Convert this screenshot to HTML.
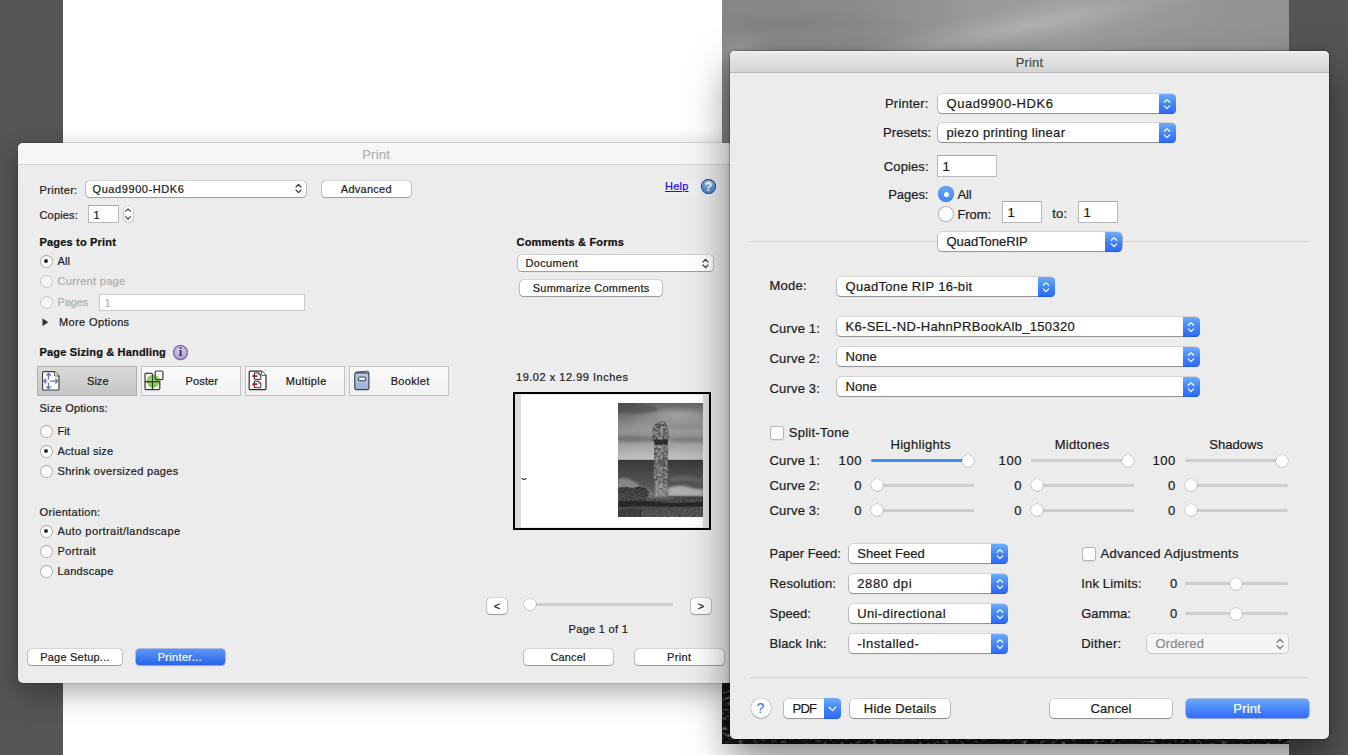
<!DOCTYPE html>
<html lang="en"><head><meta charset="utf-8"><title>Print</title>
<style>
html,body{margin:0;padding:0}
body{width:1348px;height:755px;overflow:hidden;position:relative;background:#555;font-family:"Liberation Sans",sans-serif;}
body>div,body>svg{position:absolute;box-sizing:border-box}
.t{position:absolute;white-space:pre;-webkit-text-stroke:.22px currentColor;}
#page{left:63px;top:0;width:1226px;height:755px;background:#fff}
#photo{left:722px;top:0;width:567px;height:744px;background:#1c1c1c;overflow:hidden}
#ph-top{position:absolute;left:0;top:0;width:567px;height:160px;
 background:
  radial-gradient(ellipse 120px 13px at 80px 22px, rgba(116,116,116,.3), rgba(116,116,116,0) 100%),
  radial-gradient(ellipse 36px 20px at 18px 50px, rgba(165,165,165,.55), rgba(165,165,165,0) 100%),
  linear-gradient(90deg,#868686 0%,#8a8a8a 22%,#919191 34%,#9a9a9a 46%,#9f9f9f 60%,#999999 74%,#959595 87%,#929292 100%);}
#ph-band{position:absolute;left:85px;top:-4px;width:440px;height:60px;transform:rotate(-11.5deg);
 background:radial-gradient(ellipse 190px 22px at 50% 50%, rgba(186,186,186,.7), rgba(178,178,178,.32) 55%, rgba(170,170,170,0) 100%);}
#ph-bot{position:absolute;left:0;top:600px;width:567px;height:144px;background:#161616}
/* dialogs */
#ld{left:18px;top:143px;width:716px;height:540px;background:#ececec;border-radius:5px;
 box-shadow:0 0 0 .5px rgba(0,0,0,.22),0 12px 28px rgba(0,0,0,.28),0 0 18px rgba(0,0,0,.07);}
#ld .tb{position:absolute;left:0;top:0;right:0;height:21px;background:#f6f6f6;border-bottom:1px solid #d2d2d2;border-radius:5px 5px 0 0}
#rd{left:730px;top:51px;width:599px;height:688px;background:#ececec;border-radius:5px;
 box-shadow:0 0 0 .5px rgba(0,0,0,.38),0 20px 40px rgba(0,0,0,.5),0 0 4px rgba(0,0,0,.15);}
#rd .tb{position:absolute;left:0;top:0;right:0;height:21px;background:linear-gradient(#ebebeb,#d4d4d4);border-bottom:1px solid #b4b4b4;border-radius:5px 5px 0 0;box-shadow:inset 0 1px 0 #f6f6f6}
/* small controls (left dialog) */
.sel-s{background:#fff;border-radius:3.5px;box-shadow:0 0 0 .5px rgba(0,0,0,.22),0 .5px 0 .5px rgba(0,0,0,.18),0 1px 1px rgba(0,0,0,.08)}
.sel-s .chs{position:absolute;right:4px;top:2.4px}
.btn-s{background:#fff;border-radius:3.5px;box-shadow:0 0 0 .5px rgba(0,0,0,.2),0 .5px 0 .5px rgba(0,0,0,.2),0 1px 1px rgba(0,0,0,.08)}
.btn-s.blue{background:linear-gradient(#5b97f7,#2a63ea);box-shadow:0 0 0 .5px rgba(30,70,200,.6),0 1px 1px rgba(0,0,0,.15)}
.inp{background:#fff;border:1px solid #b9b9b9;border-top-color:#a7a7a7}
.step{position:absolute;background:#fff;border-radius:5px;box-shadow:0 0 0 .5px rgba(0,0,0,.16),0 .5px 1px .5px rgba(0,0,0,.14)}
.step svg{position:absolute;left:0;top:0}
.rad-s{width:13px;height:13px;border-radius:50%;background:#fff;box-shadow:inset 0 0 0 1px #a9a9a9,inset 0 1px 1px rgba(0,0,0,.08)}
.rad-s.dis{box-shadow:inset 0 0 0 1px #c6c6c6;background:#f4f4f4}
.rad-s.on:after{content:"";position:absolute;left:4.5px;top:4.5px;width:4px;height:4px;border-radius:50%;background:#2a2a2a}
.info{width:15px;height:15px;border-radius:50%;background:radial-gradient(circle at 50% 35%,#dcd3ec,#b3a5d2 60%,#9c8cc2 100%);box-shadow:inset 0 0 0 1px #6f5f96,0 .5px .5px rgba(0,0,0,.2);text-align:center}
.info span{display:block;font:bold 12.5px/15px "Liberation Serif",serif;color:#3a2b63}
.help-s{width:15px;height:15px;border-radius:50%;background:radial-gradient(circle at 50% 22%,#a4c6f0,#5b8dd2 55%,#4a7cc6 100%);box-shadow:inset 0 0 0 .9px #30508f;text-align:center}
.help-s span{display:block;font:bold 13px/15.4px "Liberation Sans",sans-serif;color:#fff}
.seg{background:linear-gradient(#fafafa,#f1f1f1);border:1px solid #c3c3c3}
.seg.on{background:linear-gradient(#d9d9d9,#c6c6c6);border-color:#aeaeae}
#pv{left:513px;top:392px;width:198px;height:138px;border:2px solid #000;background:#dcdcdc;overflow:hidden}
.trk{background:#cdcdcd;border-radius:1.5px}
.trk.bl{background:#3f8cf7}
.knob{border-radius:50%;background:#fff;box-shadow:0 0 0 .5px rgba(0,0,0,.2),0 .5px 1px rgba(0,0,0,.16)}
/* regular controls (right dialog) */
.pop{background:#fff;border-radius:4px;box-shadow:0 0 0 .5px rgba(0,0,0,.2),0 .5px 0 .5px rgba(0,0,0,.22),0 1px 1.5px rgba(0,0,0,.12)}
.pop .cap{position:absolute;right:-.5px;top:-.5px;width:17.2px;height:20px;border-radius:0 4.5px 4.5px 0;background:linear-gradient(#6cabfb,#3f82f8 55%,#2c68f5);box-shadow:inset 0 -.5px 0 rgba(20,60,200,.5)}
.pop.dis{background:#f5f5f5;box-shadow:0 0 0 .5px rgba(0,0,0,.14),0 .5px 0 .5px rgba(0,0,0,.1)}
.btn{background:#fff;border-radius:4px;box-shadow:0 0 0 .5px rgba(0,0,0,.2),0 .5px 0 .5px rgba(0,0,0,.22),0 1px 1.5px rgba(0,0,0,.12)}
.btn.blue{background:linear-gradient(#69a8fb,#2d6bf6);box-shadow:0 0 0 .5px rgba(28,80,220,.6),0 1px 1.5px rgba(0,0,0,.15)}
.btn.pdf .cap{position:absolute;right:-.5px;top:-.5px;width:16.8px;height:20.4px;border-radius:0 4.5px 4.5px 0;background:linear-gradient(#6cabfb,#3f82f8 55%,#2c68f5);box-shadow:inset 0 -.5px 0 rgba(20,60,200,.5)}
.rad{width:16px;height:16px;border-radius:50%;background:#fff;box-shadow:inset 0 0 0 1px #b3b3b3,0 .5px 1px rgba(0,0,0,.1)}
.rad.on{background:linear-gradient(#6aa6f9,#4485f5);box-shadow:inset 0 0 0 .5px rgba(40,100,230,.5)}
.rad.on:after{content:"";position:absolute;left:5.5px;top:5.5px;width:5px;height:5px;border-radius:50%;background:#fff}
.chk{background:#fff;border-radius:3px;box-shadow:inset 0 0 0 1px #b5b5b5,0 .5px 1px rgba(0,0,0,.08)}
.sep{background:#d2d2d2}
.help-l{width:20px;height:20px;border-radius:50%;background:#fff;box-shadow:0 0 0 .5px rgba(0,0,0,.22),0 1px 1.5px rgba(0,0,0,.18);text-align:center}
.help-l span{display:block;font:14px/20.5px "Liberation Sans",sans-serif;color:#2b74f2}

</style></head>
<body>
<div id="page"></div>
<div id="photo"><div id="ph-top"></div><div id="ph-band"></div><div id="ph-bot"><svg width="567" height="144" style="position:absolute;left:0;top:0"><filter id="gr" x="0" y="0" width="100%" height="100%"><feTurbulence type="fractalNoise" baseFrequency="0.18 0.32" numOctaves="3" seed="11"/><feColorMatrix type="matrix" values="0 0 0 0 0.85  0 0 0 0 0.85  0 0 0 0 0.85  2.6 2.6 0 0 -2.75"/></filter><rect width="567" height="144" filter="url(#gr)" opacity="0.5"/></svg></div></div>
<div id="ld"><div class="tb"></div></div>
<div class="t" style="left:362.13px;top:146.60px;font-size:13px;line-height:16px;color:#b0b0b0;letter-spacing:0.253px;">Print</div>
<div class="t" style="left:39.50px;top:182.90px;font-size:11px;line-height:14px;color:#1c1c1c;letter-spacing:0.316px;">Printer:</div>
<div class="sel-s" style="left:86.1px;top:181.1px;width:219.8px;height:15.6px;"><svg class="chs" width="7" height="11" viewBox="0 0 7 11"><path d="M1 4 L3.5 1.4 L6 4 M1 7 L3.5 9.6 L6 7" fill="none" stroke="#333" stroke-width="1.15" stroke-linecap="round" stroke-linejoin="round"/></svg></div>
<div class="t" style="left:92.50px;top:181.70px;font-size:11px;line-height:14px;color:#1c1c1c;letter-spacing:0.585px;">Quad9900-HDK6</div>
<div class="btn-s" style="left:321.6px;top:181.1px;width:89.3px;height:15.6px;"></div>
<div class="t" style="left:340.83px;top:182.00px;font-size:11px;line-height:14px;color:#1c1c1c;letter-spacing:0.258px;">Advanced</div>
<div class="" style="left:660.5px;top:178.5px;width:38.2px;height:18.2px;background:#eeeeee;"></div>
<div class="t" style="left:665.00px;top:179.30px;font-size:11px;line-height:14px;color:#1f0cf0;letter-spacing:0.219px;text-decoration:underline;">Help</div>
<div class="help-s" style="left:701px;top:179.2px"><span>?</span></div>
<div class="t" style="left:39.50px;top:207.80px;font-size:11px;line-height:14px;color:#1c1c1c;letter-spacing:0.172px;">Copies:</div>
<div class="inp" style="left:88px;top:205px;width:31px;height:18px;"></div>
<div class="t" style="left:93.50px;top:207.80px;font-size:11px;line-height:14px;color:#1c1c1c;">1</div>
<div class="step" style="left:123.6px;top:205.9px;width:9.6px;height:16.4px"><svg width="10" height="18" viewBox="0 0 10 18" style="position:absolute;left:-0.2px;top:-0.8px"><path d="M2.5 6.4 L5 3.9 L7.5 6.4 M2.5 11.6 L5 14.1 L7.5 11.6" fill="none" stroke="#3a3a3a" stroke-width="1.1" stroke-linecap="round" stroke-linejoin="round"/></svg></div>
<div class="t" style="left:39.50px;top:235.00px;font-size:11px;line-height:14px;color:#111;letter-spacing:0.181px;font-weight:bold;">Pages to Print</div>
<div class="rad-s on" style="left:39.5px;top:254.5px"></div>
<div class="t" style="left:57.50px;top:254.20px;font-size:11px;line-height:14px;color:#1c1c1c;letter-spacing:0.089px;">All</div>
<div class="rad-s dis" style="left:39.5px;top:274.5px"></div>
<div class="t" style="left:57.50px;top:274.20px;font-size:11px;line-height:14px;color:#adadad;letter-spacing:0.315px;">Current page</div>
<div class="rad-s dis" style="left:39.5px;top:295.5px"></div>
<div class="t" style="left:57.50px;top:295.20px;font-size:11px;line-height:14px;color:#adadad;letter-spacing:-0.141px;">Pages</div>
<div class="inp" style="left:99px;top:293.5px;width:206px;height:17px;border-color:#c9c9c9;"></div>
<div class="t" style="left:104.50px;top:295.80px;font-size:11px;line-height:14px;color:#b4b4b4;">1</div>
<svg style="position:absolute;left:41.6px;top:317.8px" width="8" height="9" viewBox="0 0 8 9"><path d="M0.5 0.3 L6.2 4.3 L0.5 8.3 Z" fill="#333"/></svg>
<div class="t" style="left:59.00px;top:315.20px;font-size:11px;line-height:14px;color:#1c1c1c;letter-spacing:0.372px;">More Options</div>
<div class="t" style="left:39.50px;top:345.40px;font-size:11px;line-height:14px;color:#111;letter-spacing:0.166px;font-weight:bold;">Page Sizing &amp; Handling</div>
<div class="info" style="left:173px;top:345px"><span>i</span></div>
<div class="seg on" style="left:37px;top:366px;width:100px;height:30px;"></div>
<div style="position:absolute;left:40.5px;top:370px;line-height:0"><svg width="20" height="21" viewBox="0 0 20 21"><path d="M2.6 1.6 H13.6 L18 6 V19 Q18 20 17 20 H2.6 Q1.6 20 1.6 19 V2.6 Q1.6 1.6 2.6 1.6 Z" fill="#fff" stroke="#3c3c3c" stroke-width="1.15" stroke-linejoin="round"/><path d="M13.6 1.6 V5 Q13.6 6 14.6 6 H18" fill="#f2f2f2" stroke="#3c3c3c" stroke-width="0.9" stroke-linejoin="round"/><g stroke="#6a74b6" stroke-width="1.35" fill="none" stroke-linecap="round" stroke-linejoin="round"><path d="M7.5 3.4 V9 M5.5 5.4 L7.5 3.3 L9.5 5.4"/><path d="M7.5 13.2 V18.6 M5.5 16.6 L7.5 18.7 L9.5 16.6"/><path d="M2.9 11.1 H6 M4.7 9.2 L2.8 11.1 L4.7 13"/><path d="M9.2 11.1 H16.6 M14.7 9.2 L16.7 11.1 L14.7 13"/></g></svg></div>
<div class="t" style="left:87.06px;top:374.30px;font-size:11px;line-height:14px;color:#1c1c1c;letter-spacing:0.023px;">Size</div>
<div class="seg" style="left:141px;top:366px;width:100px;height:30px;"></div>
<div style="position:absolute;left:144px;top:370px;line-height:0"><svg width="21" height="21" viewBox="0 0 21 21"><defs><radialGradient id="gc" cx="0.45" cy="0.4" r="0.6"><stop offset="0" stop-color="#9be06a"/><stop offset="1" stop-color="#7cc84a"/></radialGradient></defs><circle cx="9.1" cy="11.1" r="6.4" fill="url(#gc)"/><g fill="none" stroke="#3a3a3a" stroke-width="1.2" stroke-linejoin="round"><path d="M2 3.3 H7.5 Q8.5 3.3 8.5 4.3 V11.6 H1 V4.3 Q1 3.3 2 3.3 Z"/><path d="M1 11.6 H8.5 V19.6 H2 Q1 19.6 1 18.6 Z"/><path d="M8.5 11.6 H15.8 V18.6 Q15.8 19.6 14.8 19.6 H8.5 Z"/><rect x="11.2" y="1" width="7.7" height="8.6" rx="1.1"/></g></svg></div>
<div class="t" style="left:185.61px;top:374.30px;font-size:11px;line-height:14px;color:#1c1c1c;letter-spacing:0.117px;">Poster</div>
<div class="seg" style="left:245px;top:366px;width:100px;height:30px;"></div>
<div style="position:absolute;left:248px;top:370px;line-height:0"><svg width="20" height="21" viewBox="0 0 20 21"><path d="M2.2 1.1 H13.6 L18 5.4 V18.7 Q18 19.7 17 19.7 H2.2 Q1.2 19.7 1.2 18.7 V2.1 Q1.2 1.1 2.2 1.1 Z" fill="#fbfbfb" stroke="#2e2e2e" stroke-width="1.2" stroke-linejoin="round"/><path d="M13.6 1.1 V4.6 Q13.6 5.4 14.4 5.4 H18" fill="#fff" stroke="#2e2e2e" stroke-width="0.8" stroke-linejoin="round"/><g fill="#fff" stroke="#2e2e2e" stroke-width="1" stroke-linejoin="round"><path d="M6.4 2.9 H10.8 L12.8 4.9 V9.4 H6.4 Z"/><path d="M6.4 11.2 H10.8 L12.8 13.2 V17.7 H6.4 Z"/></g><g fill="none" stroke="#2e2e2e" stroke-width="0.7"><path d="M10.8 2.9 V4.9 H12.8"/><path d="M10.8 11.2 V13.2 H12.8"/></g><g fill="#c40f23"><path d="M3.9 6.1 L6 4.4 V5.2 H9.4 V7 H6 V7.8 Z"/><path d="M3.9 14.2 L6 12.5 V13.3 H9.4 V15.1 H6 V15.9 Z"/></g></svg></div>
<div class="t" style="left:285.69px;top:374.30px;font-size:11px;line-height:14px;color:#1c1c1c;letter-spacing:0.387px;">Multiple</div>
<div class="seg" style="left:349px;top:366px;width:100px;height:30px;"></div>
<div style="position:absolute;left:353.8px;top:370px;line-height:0"><svg width="17" height="21" viewBox="0 0 17 21"><defs><linearGradient id="bk" x1="0" y1="0" x2="0" y2="1"><stop offset="0" stop-color="#b7cdea"/><stop offset="1" stop-color="#98b4d9"/></linearGradient></defs><path d="M1.4 3.2 Q1.6 2 3 1.9 L13.4 1.1 Q14.6 1.1 14.8 2.2 V3.4 Z" fill="#e6ebf2" stroke="#3d4656" stroke-width="0.9" stroke-linejoin="round"/><rect x="0.8" y="2.9" width="14.1" height="16.7" rx="1.6" fill="url(#bk)" stroke="#3d4656" stroke-width="1.2"/><rect x="4.6" y="7.1" width="7" height="3.6" rx="0.5" fill="#fff" stroke="#333a48" stroke-width="1"/></svg></div>
<div class="t" style="left:390.66px;top:374.30px;font-size:11px;line-height:14px;color:#1c1c1c;letter-spacing:0.328px;">Booklet</div>
<div class="t" style="left:39.50px;top:401.20px;font-size:11px;line-height:14px;color:#1c1c1c;letter-spacing:0.237px;">Size Options:</div>
<div class="rad-s" style="left:39.5px;top:424.5px"></div>
<div class="t" style="left:57.50px;top:424.20px;font-size:11px;line-height:14px;color:#1c1c1c;letter-spacing:0.089px;">Fit</div>
<div class="rad-s on" style="left:39.5px;top:444.5px"></div>
<div class="t" style="left:57.50px;top:444.20px;font-size:11px;line-height:14px;color:#1c1c1c;letter-spacing:0.254px;">Actual size</div>
<div class="rad-s" style="left:39.5px;top:464.5px"></div>
<div class="t" style="left:57.50px;top:464.20px;font-size:11px;line-height:14px;color:#1c1c1c;letter-spacing:0.303px;">Shrink oversized pages</div>
<div class="t" style="left:39.50px;top:505.00px;font-size:11px;line-height:14px;color:#1c1c1c;letter-spacing:0.344px;">Orientation:</div>
<div class="rad-s on" style="left:39.5px;top:524.5px"></div>
<div class="t" style="left:57.50px;top:524.20px;font-size:11px;line-height:14px;color:#1c1c1c;letter-spacing:0.429px;">Auto portrait/landscape</div>
<div class="rad-s" style="left:39.5px;top:544.5px"></div>
<div class="t" style="left:57.50px;top:544.20px;font-size:11px;line-height:14px;color:#1c1c1c;letter-spacing:0.379px;">Portrait</div>
<div class="rad-s" style="left:39.5px;top:564.5px"></div>
<div class="t" style="left:57.50px;top:564.20px;font-size:11px;line-height:14px;color:#1c1c1c;letter-spacing:0.241px;">Landscape</div>
<div class="btn-s" style="left:27.6px;top:648.6px;width:94.3px;height:16.1px;"></div>
<div class="t" style="left:40.16px;top:650.20px;font-size:11px;line-height:14px;color:#1c1c1c;letter-spacing:0.218px;">Page Setup...</div>
<div class="btn-s blue" style="left:135.6px;top:648.6px;width:89.3px;height:16.1px;"></div>
<div class="t" style="left:157.64px;top:650.20px;font-size:11px;line-height:14px;color:#fff;letter-spacing:0.328px;">Printer...</div>
<div class="t" style="left:516.50px;top:235.00px;font-size:11px;line-height:14px;color:#111;letter-spacing:0.186px;font-weight:bold;">Comments &amp; Forms</div>
<div class="sel-s" style="left:518.1px;top:255.4px;width:195.0px;height:15.6px;"><svg class="chs" width="7" height="11" viewBox="0 0 7 11"><path d="M1 4 L3.5 1.4 L6 4 M1 7 L3.5 9.6 L6 7" fill="none" stroke="#333" stroke-width="1.15" stroke-linecap="round" stroke-linejoin="round"/></svg></div>
<div class="t" style="left:525.50px;top:255.90px;font-size:11px;line-height:14px;color:#1c1c1c;letter-spacing:0.326px;">Document</div>
<div class="btn-s" style="left:519.8000000000001px;top:279.8px;width:142.3px;height:16.1px;"></div>
<div class="t" style="left:532.64px;top:281.30px;font-size:11px;line-height:14px;color:#1c1c1c;letter-spacing:0.286px;">Summarize Comments</div>
<div class="t" style="left:516.00px;top:370.20px;font-size:11px;line-height:14px;color:#1c1c1c;letter-spacing:0.518px;">19.02 x 12.99 Inches</div>
<div id="pv"><svg width="194" height="134" viewBox="0 0 194 134" style="position:absolute;left:0;top:0">
<defs>
<linearGradient id="sky" x1="0" y1="0" x2="0" y2="1"><stop offset="0" stop-color="#646464"/><stop offset="0.22" stop-color="#8c8c8c"/><stop offset="0.45" stop-color="#9d9d9d"/><stop offset="0.6" stop-color="#909090"/><stop offset="0.75" stop-color="#a6a6a6"/><stop offset="0.9" stop-color="#b8b8b8"/><stop offset="1" stop-color="#c0c0c0"/></linearGradient>
<radialGradient id="skyl" cx="0" cy="0" r="1"><stop offset="0" stop-color="#000" stop-opacity="0.3"/><stop offset="0.6" stop-color="#000" stop-opacity="0.05"/><stop offset="1" stop-color="#000" stop-opacity="0"/></radialGradient>
<linearGradient id="sea" x1="0" y1="0" x2="0" y2="1"><stop offset="0" stop-color="#393939"/><stop offset="0.35" stop-color="#4a4a4a"/><stop offset="0.7" stop-color="#585858"/><stop offset="1" stop-color="#6e6e6e"/></linearGradient>
<linearGradient id="land" x1="0" y1="0" x2="0" y2="1"><stop offset="0" stop-color="#2b2b2b"/><stop offset="0.4" stop-color="#3a3a3a"/><stop offset="1" stop-color="#474747"/></linearGradient>
<linearGradient id="col" x1="0" y1="0" x2="1" y2="0"><stop offset="0" stop-color="#787878"/><stop offset="0.45" stop-color="#a2a2a2"/><stop offset="1" stop-color="#828282"/></linearGradient>
<radialGradient id="cl1" cx="0.5" cy="0.5" r="0.5"><stop offset="0" stop-color="#ababab" stop-opacity="0.7"/><stop offset="1" stop-color="#ababab" stop-opacity="0"/></radialGradient>
<filter id="bl" x="-30%" y="-200%" width="160%" height="500%"><feGaussianBlur stdDeviation="1.3"/></filter>
<filter id="bl2" x="-20%" y="-100%" width="140%" height="300%"><feGaussianBlur stdDeviation="0.5"/></filter>
<filter id="rock" x="0" y="0" width="100%" height="100%"><feTurbulence type="fractalNoise" baseFrequency="0.42" numOctaves="2" seed="7" result="n"/><feColorMatrix in="n" type="matrix" values="0 0 0 0 0  0 0 0 0 0  0 0 0 0 0  1.9 1.9 0 0 -1.45" result="a"/><feComposite in="a" in2="SourceGraphic" operator="in"/></filter>
<filter id="grass" x="0" y="0" width="100%" height="100%"><feTurbulence type="fractalNoise" baseFrequency="0.5 0.9" numOctaves="3" seed="3" result="n"/><feColorMatrix in="n" type="matrix" values="0 0 0 0 0.55  0 0 0 0 0.55  0 0 0 0 0.55  1.6 1.6 0 0 -1.3" result="a"/><feComposite in="a" in2="SourceGraphic" operator="in"/></filter>
<clipPath id="pc"><rect x="0" y="0" width="85" height="114"/></clipPath>
</defs>
<rect x="0" y="0" width="194" height="134" fill="#dcdcdc"/>
<rect x="6" y="0.5" width="182" height="133" fill="#fff"/>
<g transform="translate(103,9)" clip-path="url(#pc)">
<rect x="0" y="0" width="85" height="57.5" fill="url(#sky)"/>
<rect x="0" y="0" width="50" height="50" fill="url(#skyl)"/>
<ellipse cx="60" cy="12" rx="32" ry="8" fill="url(#cl1)"/>
<ellipse cx="14" cy="36" rx="24" ry="3" fill="#636363" opacity="0.55" filter="url(#bl)"/>
<ellipse cx="70" cy="37" rx="20" ry="2.6" fill="#666" opacity="0.5" filter="url(#bl)"/>
<ellipse cx="16" cy="6" rx="24" ry="5" fill="#4a4a4a" opacity="0.5" filter="url(#bl)"/>
<ellipse cx="68" cy="24" rx="20" ry="3" fill="#777" opacity="0.35" filter="url(#bl)"/>
<rect x="0" y="57" width="85" height="40" fill="url(#sea)"/>
<rect x="0" y="56.8" width="85" height="0.9" fill="#303030" opacity="0.7"/>
<path d="M0 76 Q7 73 15 78 Q22 83 30 86 L34 92 H0 Z" fill="#a8a8a8" opacity="0.6" filter="url(#bl)"/>
<path d="M50 85 Q60 81 70 84 T85 86 V93 H50 Z" fill="#c8c8c8" opacity="0.75" filter="url(#bl)"/>
<path d="M52 74 Q66 70 85 76 V80 Q66 76 52 79 Z" fill="#808080" opacity="0.4" filter="url(#bl)"/>
<path d="M0 85 Q6 82.4 14 85 L19 84 Q24 82 27.6 85 L32 90 L36 92.6 L50 93.4 H85 V114 H0 Z" fill="url(#land)"/>
<path d="M0 85 Q6 82.4 14 85 L19 84 Q24 82 27.6 85 L32 90 L36 92.6 L50 93.4 H85 V114 H0 Z" fill="#9a9a9a" filter="url(#grass)" opacity="0.3"/>
<path d="M0 98.5 Q20 97 40 99 T85 98.5 V103.5 Q60 104.4 40 103.5 T0 104 Z" fill="#1c1c1c" opacity="0.75" filter="url(#bl2)"/>
<path d="M0 106 H24 V114 H0 Z" fill="#2a2a2a" opacity="0.45" filter="url(#bl2)"/>
<path d="M36.4 21.6 Q36 18.8 38.4 18.8 L40.8 19.2 L43.4 18.6 Q47.8 18.4 48.8 21 L50 26.4 L51 35.6 L49.6 37.4 L50.2 48 L49.6 60 L50.4 72 L49.4 82 L50.4 95.2 H35.6 L36.6 84 L35.6 74 L36.4 60 L36 48 L36.6 38.6 L33.4 37.6 L34.8 31 L34.4 26 Z" fill="url(#col)"/>
<path d="M36.4 21.6 Q36 18.8 38.4 18.8 L40.8 19.2 L43.4 18.6 Q47.8 18.4 48.8 21 L50 26.4 L51 35.6 L49.6 37.4 L50.2 48 L49.6 60 L50.4 72 L49.4 82 L50.4 95.2 H35.6 L36.6 84 L35.6 74 L36.4 60 L36 48 L36.6 38.6 L33.4 37.6 L34.8 31 L34.4 26 Z" fill="#303030" filter="url(#rock)" opacity="0.5"/>
<path d="M35.4 36.4 H50 L49.6 41.6 H36.8 Z" fill="#242424" opacity="0.9"/>
<ellipse cx="42.8" cy="59.6" rx="3.6" ry="3.6" fill="#4c4c4c" opacity="0.55"/>
<ellipse cx="41.6" cy="22.2" rx="2" ry="1.6" fill="#333" opacity="0.6"/>
<path d="M36.6 80.4 H49.6 L50.4 95.2 H35.8 Z" fill="#b0b0b0" opacity="0.3"/>
<path d="M28 93.6 H56 V96.6 H28 Z" fill="#5e5e5e" opacity="0.8"/>
<rect x="30.4" y="90" width="4.4" height="4.4" fill="#808080" opacity="0.75"/>
</g>
<path d="M6.5 84.4 h1.2 v1 h2.6 v-0.8 h1.4" stroke="#111" stroke-width="0.9" fill="none"/>
</svg></div>
<div class="btn-s" style="left:486.6px;top:598.1px;width:20.3px;height:15.6px;"></div>
<div class="t" style="left:493.68px;top:598.60px;font-size:11px;line-height:14px;color:#1c1c1c;">&lt;</div>
<div class="btn-s" style="left:690.6px;top:598.1px;width:20.3px;height:15.6px;"></div>
<div class="t" style="left:697.68px;top:598.60px;font-size:11px;line-height:14px;color:#1c1c1c;">&gt;</div>
<div class="trk" style="left:526px;top:603px;width:147px;height:3px;"></div>
<div class="knob" style="left:524.4px;top:598.7px;width:11.6px;height:11.6px;"></div>
<div class="t" style="left:568.60px;top:622.20px;font-size:11px;line-height:14px;color:#1c1c1c;letter-spacing:0.293px;">Page 1 of 1</div>
<div class="btn-s" style="left:523.6px;top:648.6px;width:89.5px;height:16.1px;"></div>
<div class="t" style="left:550.56px;top:650.20px;font-size:11px;line-height:14px;color:#1c1c1c;letter-spacing:0.125px;">Cancel</div>
<div class="btn-s" style="left:634.6px;top:648.6px;width:89.3px;height:16.1px;"></div>
<div class="t" style="left:666.94px;top:650.20px;font-size:11px;line-height:14px;color:#1c1c1c;letter-spacing:0.375px;">Print</div>
<div id="rd"><div class="tb"></div></div>
<div class="t" style="left:1015.63px;top:55.00px;font-size:13px;line-height:16px;color:#4b4b4b;letter-spacing:0.203px;">Print</div>
<div class="t" style="left:884.98px;top:96.10px;font-size:13px;line-height:16px;color:#1c1c1c;letter-spacing:0.230px;">Printer:</div>
<div class="pop" style="left:938.0px;top:94.0px;width:237.2px;height:19px;"><div class="cap"><svg width="8" height="12" viewBox="0 0 8 12" style="position:absolute;left:4.8px;top:4px"><path d="M1.3 4.3 L4 1.6 L6.7 4.3 M1.3 7.9 L4 10.6 L6.7 7.9" fill="none" stroke="#fff" stroke-width="1.25" stroke-linecap="round" stroke-linejoin="round"/></svg></div></div>
<div class="t" style="left:946.50px;top:96.10px;font-size:13px;line-height:16px;color:#1c1c1c;letter-spacing:0.559px;">Quad9900-HDK6</div>
<div class="t" style="left:883.02px;top:125.10px;font-size:13px;line-height:16px;color:#1c1c1c;letter-spacing:0.070px;">Presets:</div>
<div class="pop" style="left:938.0px;top:123.0px;width:237.2px;height:19px;"><div class="cap"><svg width="8" height="12" viewBox="0 0 8 12" style="position:absolute;left:4.8px;top:4px"><path d="M1.3 4.3 L4 1.6 L6.7 4.3 M1.3 7.9 L4 10.6 L6.7 7.9" fill="none" stroke="#fff" stroke-width="1.25" stroke-linecap="round" stroke-linejoin="round"/></svg></div></div>
<div class="t" style="left:946.50px;top:125.10px;font-size:13px;line-height:16px;color:#1c1c1c;letter-spacing:0.286px;">piezo printing linear</div>
<div class="t" style="left:883.85px;top:159.00px;font-size:13px;line-height:16px;color:#1c1c1c;letter-spacing:0.096px;">Copies:</div>
<div class="inp" style="left:937.3px;top:155.2px;width:59.5px;height:21.4px;"></div>
<div class="t" style="left:942.50px;top:159.20px;font-size:13px;line-height:16px;color:#1c1c1c;">1</div>
<div class="t" style="left:888.21px;top:187.00px;font-size:13px;line-height:16px;color:#1c1c1c;letter-spacing:-0.039px;">Pages:</div>
<div class="rad on" style="left:938px;top:186px"></div>
<div class="t" style="left:957.50px;top:186.90px;font-size:13px;line-height:16px;color:#1c1c1c;letter-spacing:-0.151px;">All</div>
<div class="rad" style="left:938px;top:206px"></div>
<div class="t" style="left:957.50px;top:206.70px;font-size:13px;line-height:16px;color:#1c1c1c;letter-spacing:-0.091px;">From:</div>
<div class="inp" style="left:1002px;top:201.2px;width:39.8px;height:21.4px;"></div>
<div class="t" style="left:1007.50px;top:205.20px;font-size:13px;line-height:16px;color:#1c1c1c;">1</div>
<div class="t" style="left:1052.20px;top:205.90px;font-size:13px;line-height:16px;color:#1c1c1c;letter-spacing:0.177px;">to:</div>
<div class="inp" style="left:1078px;top:201.2px;width:39.8px;height:21.4px;"></div>
<div class="t" style="left:1083.50px;top:205.20px;font-size:13px;line-height:16px;color:#1c1c1c;">1</div>
<div class="sep" style="left:750px;top:241px;width:559px;height:1px;"></div>
<div class="pop" style="left:938.0px;top:232.0px;width:183.5px;height:19px;"><div class="cap"><svg width="8" height="12" viewBox="0 0 8 12" style="position:absolute;left:4.8px;top:4px"><path d="M1.3 4.3 L4 1.6 L6.7 4.3 M1.3 7.9 L4 10.6 L6.7 7.9" fill="none" stroke="#fff" stroke-width="1.25" stroke-linecap="round" stroke-linejoin="round"/></svg></div></div>
<div class="t" style="left:946.50px;top:234.10px;font-size:13px;line-height:16px;color:#1c1c1c;letter-spacing:-0.038px;">QuadToneRIP</div>
<div class="t" style="left:769.50px;top:278.20px;font-size:13px;line-height:16px;color:#1c1c1c;letter-spacing:0.222px;">Mode:</div>
<div class="pop" style="left:837.0px;top:277.2px;width:217.3px;height:19px;"><div class="cap"><svg width="8" height="12" viewBox="0 0 8 12" style="position:absolute;left:4.8px;top:4px"><path d="M1.3 4.3 L4 1.6 L6.7 4.3 M1.3 7.9 L4 10.6 L6.7 7.9" fill="none" stroke="#fff" stroke-width="1.25" stroke-linecap="round" stroke-linejoin="round"/></svg></div></div>
<div class="t" style="left:845.50px;top:279.30px;font-size:13px;line-height:16px;color:#1c1c1c;letter-spacing:0.307px;">QuadTone RIP 16-bit</div>
<div class="t" style="left:769.50px;top:320.80px;font-size:13px;line-height:16px;color:#1c1c1c;letter-spacing:0.170px;">Curve 1:</div>
<div class="pop" style="left:837.0px;top:317.2px;width:362.2px;height:19px;"><div class="cap"><svg width="8" height="12" viewBox="0 0 8 12" style="position:absolute;left:4.8px;top:4px"><path d="M1.3 4.3 L4 1.6 L6.7 4.3 M1.3 7.9 L4 10.6 L6.7 7.9" fill="none" stroke="#fff" stroke-width="1.25" stroke-linecap="round" stroke-linejoin="round"/></svg></div></div>
<div class="t" style="left:845.50px;top:319.30px;font-size:13px;line-height:16px;color:#1c1c1c;letter-spacing:0.303px;">K6-SEL-ND-HahnPRBookAlb_150320</div>
<div class="t" style="left:769.50px;top:350.80px;font-size:13px;line-height:16px;color:#1c1c1c;letter-spacing:0.170px;">Curve 2:</div>
<div class="pop" style="left:837.0px;top:347.2px;width:362.2px;height:19px;"><div class="cap"><svg width="8" height="12" viewBox="0 0 8 12" style="position:absolute;left:4.8px;top:4px"><path d="M1.3 4.3 L4 1.6 L6.7 4.3 M1.3 7.9 L4 10.6 L6.7 7.9" fill="none" stroke="#fff" stroke-width="1.25" stroke-linecap="round" stroke-linejoin="round"/></svg></div></div>
<div class="t" style="left:845.50px;top:349.30px;font-size:13px;line-height:16px;color:#1c1c1c;letter-spacing:0.043px;">None</div>
<div class="t" style="left:769.50px;top:380.70px;font-size:13px;line-height:16px;color:#1c1c1c;letter-spacing:0.170px;">Curve 3:</div>
<div class="pop" style="left:837.0px;top:377.0px;width:362.2px;height:19px;"><div class="cap"><svg width="8" height="12" viewBox="0 0 8 12" style="position:absolute;left:4.8px;top:4px"><path d="M1.3 4.3 L4 1.6 L6.7 4.3 M1.3 7.9 L4 10.6 L6.7 7.9" fill="none" stroke="#fff" stroke-width="1.25" stroke-linecap="round" stroke-linejoin="round"/></svg></div></div>
<div class="t" style="left:845.50px;top:379.10px;font-size:13px;line-height:16px;color:#1c1c1c;letter-spacing:0.043px;">None</div>
<div class="chk" style="left:770px;top:425.5px;width:14px;height:14px;"></div>
<div class="t" style="left:788.70px;top:425.10px;font-size:13px;line-height:16px;color:#1c1c1c;letter-spacing:0.269px;">Split-Tone</div>
<div class="t" style="left:890.42px;top:437.00px;font-size:13px;line-height:16px;color:#1c1c1c;letter-spacing:0.341px;">Highlights</div>
<div class="t" style="left:1054.64px;top:437.00px;font-size:13px;line-height:16px;color:#1c1c1c;letter-spacing:0.281px;">Midtones</div>
<div class="t" style="left:1209.34px;top:437.00px;font-size:13px;line-height:16px;color:#1c1c1c;letter-spacing:0.038px;">Shadows</div>
<div class="t" style="left:769.50px;top:453.20px;font-size:13px;line-height:16px;color:#1c1c1c;letter-spacing:0.170px;">Curve 1:</div>
<div class="t" style="left:838.60px;top:453.30px;font-size:13px;line-height:16px;color:#1c1c1c;letter-spacing:0.599px;">100</div>
<div class="trk bl" style="left:871px;top:459.1px;width:103px;height:3px;"></div>
<div class="knob" style="left:962.0px;top:454.6px;width:12px;height:12px;"></div>
<div class="t" style="left:998.60px;top:453.30px;font-size:13px;line-height:16px;color:#1c1c1c;letter-spacing:0.599px;">100</div>
<div class="trk" style="left:1031px;top:459.1px;width:103px;height:3px;"></div>
<div class="knob" style="left:1122.0px;top:454.6px;width:12px;height:12px;"></div>
<div class="t" style="left:1152.40px;top:453.30px;font-size:13px;line-height:16px;color:#1c1c1c;letter-spacing:0.599px;">100</div>
<div class="trk" style="left:1185px;top:459.1px;width:103px;height:3px;"></div>
<div class="knob" style="left:1276.0px;top:454.6px;width:12px;height:12px;"></div>
<div class="t" style="left:769.50px;top:478.00px;font-size:13px;line-height:16px;color:#1c1c1c;letter-spacing:0.170px;">Curve 2:</div>
<div class="t" style="left:854.27px;top:478.10px;font-size:13px;line-height:16px;color:#1c1c1c;">0</div>
<div class="trk" style="left:871px;top:483.9px;width:103px;height:3px;"></div>
<div class="knob" style="left:870.6px;top:479.4px;width:12px;height:12px;"></div>
<div class="t" style="left:1014.27px;top:478.10px;font-size:13px;line-height:16px;color:#1c1c1c;">0</div>
<div class="trk" style="left:1031px;top:483.9px;width:103px;height:3px;"></div>
<div class="knob" style="left:1030.6px;top:479.4px;width:12px;height:12px;"></div>
<div class="t" style="left:1168.07px;top:478.10px;font-size:13px;line-height:16px;color:#1c1c1c;">0</div>
<div class="trk" style="left:1185px;top:483.9px;width:103px;height:3px;"></div>
<div class="knob" style="left:1184.6px;top:479.4px;width:12px;height:12px;"></div>
<div class="t" style="left:769.50px;top:503.00px;font-size:13px;line-height:16px;color:#1c1c1c;letter-spacing:0.170px;">Curve 3:</div>
<div class="t" style="left:854.27px;top:503.10px;font-size:13px;line-height:16px;color:#1c1c1c;">0</div>
<div class="trk" style="left:871px;top:508.9px;width:103px;height:3px;"></div>
<div class="knob" style="left:870.6px;top:504.4px;width:12px;height:12px;"></div>
<div class="t" style="left:1014.27px;top:503.10px;font-size:13px;line-height:16px;color:#1c1c1c;">0</div>
<div class="trk" style="left:1031px;top:508.9px;width:103px;height:3px;"></div>
<div class="knob" style="left:1030.6px;top:504.4px;width:12px;height:12px;"></div>
<div class="t" style="left:1168.07px;top:503.10px;font-size:13px;line-height:16px;color:#1c1c1c;">0</div>
<div class="trk" style="left:1185px;top:508.9px;width:103px;height:3px;"></div>
<div class="knob" style="left:1184.6px;top:504.4px;width:12px;height:12px;"></div>
<div class="t" style="left:769.50px;top:546.10px;font-size:13px;line-height:16px;color:#1c1c1c;letter-spacing:-0.027px;">Paper Feed:</div>
<div class="pop" style="left:848.7px;top:544.0px;width:158.8px;height:19px;"><div class="cap"><svg width="8" height="12" viewBox="0 0 8 12" style="position:absolute;left:4.8px;top:4px"><path d="M1.3 4.3 L4 1.6 L6.7 4.3 M1.3 7.9 L4 10.6 L6.7 7.9" fill="none" stroke="#fff" stroke-width="1.25" stroke-linecap="round" stroke-linejoin="round"/></svg></div></div>
<div class="t" style="left:857.20px;top:546.10px;font-size:13px;line-height:16px;color:#1c1c1c;letter-spacing:0.028px;">Sheet Feed</div>
<div class="t" style="left:769.50px;top:576.30px;font-size:13px;line-height:16px;color:#1c1c1c;letter-spacing:0.132px;">Resolution:</div>
<div class="pop" style="left:848.7px;top:574.0px;width:158.8px;height:19px;"><div class="cap"><svg width="8" height="12" viewBox="0 0 8 12" style="position:absolute;left:4.8px;top:4px"><path d="M1.3 4.3 L4 1.6 L6.7 4.3 M1.3 7.9 L4 10.6 L6.7 7.9" fill="none" stroke="#fff" stroke-width="1.25" stroke-linecap="round" stroke-linejoin="round"/></svg></div></div>
<div class="t" style="left:857.20px;top:576.10px;font-size:13px;line-height:16px;color:#1c1c1c;letter-spacing:0.639px;">2880 dpi</div>
<div class="t" style="left:769.50px;top:606.20px;font-size:13px;line-height:16px;color:#1c1c1c;letter-spacing:0.008px;">Speed:</div>
<div class="pop" style="left:848.7px;top:604.0px;width:158.8px;height:19px;"><div class="cap"><svg width="8" height="12" viewBox="0 0 8 12" style="position:absolute;left:4.8px;top:4px"><path d="M1.3 4.3 L4 1.6 L6.7 4.3 M1.3 7.9 L4 10.6 L6.7 7.9" fill="none" stroke="#fff" stroke-width="1.25" stroke-linecap="round" stroke-linejoin="round"/></svg></div></div>
<div class="t" style="left:857.20px;top:606.10px;font-size:13px;line-height:16px;color:#1c1c1c;letter-spacing:0.377px;">Uni-directional</div>
<div class="t" style="left:769.50px;top:636.20px;font-size:13px;line-height:16px;color:#1c1c1c;letter-spacing:0.089px;">Black Ink:</div>
<div class="pop" style="left:848.7px;top:634.0px;width:158.8px;height:19px;"><div class="cap"><svg width="8" height="12" viewBox="0 0 8 12" style="position:absolute;left:4.8px;top:4px"><path d="M1.3 4.3 L4 1.6 L6.7 4.3 M1.3 7.9 L4 10.6 L6.7 7.9" fill="none" stroke="#fff" stroke-width="1.25" stroke-linecap="round" stroke-linejoin="round"/></svg></div></div>
<div class="t" style="left:857.20px;top:636.10px;font-size:13px;line-height:16px;color:#1c1c1c;letter-spacing:0.447px;">-Installed-</div>
<div class="chk" style="left:1082px;top:546.5px;width:14px;height:14px;"></div>
<div class="t" style="left:1100.50px;top:545.80px;font-size:13px;line-height:16px;color:#1c1c1c;letter-spacing:0.300px;">Advanced Adjustments</div>
<div class="t" style="left:1081.20px;top:575.90px;font-size:13px;line-height:16px;color:#1c1c1c;letter-spacing:0.180px;">Ink Limits:</div>
<div class="t" style="left:1169.97px;top:576.10px;font-size:13px;line-height:16px;color:#1c1c1c;">0</div>
<div class="trk" style="left:1185px;top:582.0px;width:103px;height:3px;"></div>
<div class="knob" style="left:1230.3px;top:577.5px;width:12px;height:12px;"></div>
<div class="t" style="left:1081.20px;top:605.90px;font-size:13px;line-height:16px;color:#1c1c1c;letter-spacing:-0.057px;">Gamma:</div>
<div class="t" style="left:1169.97px;top:606.10px;font-size:13px;line-height:16px;color:#1c1c1c;">0</div>
<div class="trk" style="left:1185px;top:612.0px;width:103px;height:3px;"></div>
<div class="knob" style="left:1230.3px;top:607.5px;width:12px;height:12px;"></div>
<div class="t" style="left:1081.20px;top:635.90px;font-size:13px;line-height:16px;color:#1c1c1c;letter-spacing:0.279px;">Dither:</div>
<div class="pop dis" style="left:1146.8px;top:634.0px;width:141.2px;height:19px;"><svg width="8" height="12" viewBox="0 0 8 12" style="position:absolute;right:4px;top:4px"><path d="M1 4.2 L4 1.3 L7 4.2 M1 7.8 L4 10.7 L7 7.8" fill="none" stroke="#7d7d7d" stroke-width="1.3" stroke-linecap="round" stroke-linejoin="round"/></svg></div>
<div class="t" style="left:1155.50px;top:636.10px;font-size:13px;line-height:16px;color:#8b8b8b;letter-spacing:0.114px;">Ordered</div>
<div class="sep" style="left:750px;top:676.5px;width:559px;height:1px;"></div>
<div class="help-l" style="left:750.5px;top:698.2px"><span>?</span></div>
<div class="btn pdf" style="left:783.8px;top:698.8px;width:56.7px;height:19.4px;"><div class="cap"><svg width="9" height="6" viewBox="0 0 9 6" style="position:absolute;left:4px;top:7.4px"><path d="M1.2 1.2 L4.5 4.6 L7.8 1.2" fill="none" stroke="#fff" stroke-width="1.3" stroke-linecap="round" stroke-linejoin="round"/></svg></div></div>
<div class="t" style="left:792.50px;top:701.00px;font-size:13px;line-height:16px;color:#1c1c1c;letter-spacing:-0.750px;">PDF</div>
<div class="btn" style="left:849.8px;top:698.8px;width:100.5px;height:19.4px;"></div>
<div class="t" style="left:863.85px;top:701.00px;font-size:13px;line-height:16px;color:#1c1c1c;letter-spacing:0.201px;">Hide Details</div>
<div class="btn" style="left:1049.8px;top:698.8px;width:122.5px;height:19.4px;"></div>
<div class="t" style="left:1090.54px;top:701.00px;font-size:13px;line-height:16px;color:#1c1c1c;letter-spacing:0.089px;">Cancel</div>
<div class="btn blue" style="left:1185.5px;top:698.8px;width:123px;height:19.4px;"></div>
<div class="t" style="left:1233.33px;top:701.00px;font-size:13px;line-height:16px;color:#fff;letter-spacing:0.153px;">Print</div>
</body></html>
